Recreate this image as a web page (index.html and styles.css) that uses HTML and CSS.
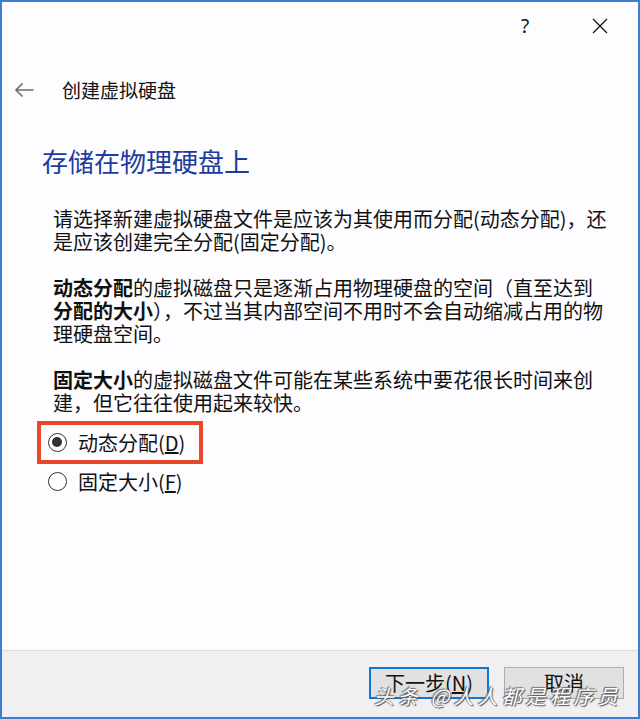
FILE: index.html
```html
<!DOCTYPE html>
<html lang="zh-CN">

<head>
    <meta charset="UTF-8">
    <meta name="viewport" content="width=device-width, initial-scale=1.0">
    <title>创建虚拟硬盘</title>
    <link rel="stylesheet" href="styles.css">
</head>

<body>
    <div class="window">
        <div class="caption">
            <span class="help">?</span>
            <svg class="close" width="16" height="16" viewBox="0 0 16 16">
                <path d="M1 1 L15 15 M15 1 L1 15" stroke="#111" stroke-width="1.3" fill="none" />
            </svg>
        </div>

        <div class="nav">
            <svg class="back" width="20" height="16" viewBox="0 0 20 16">
                <path d="M19.5 8 H2 M8.5 1.5 L2 8 L8.5 14.5" stroke="#6b6b6b" stroke-width="1.6" fill="none" />
            </svg>
            <span class="nav-title">创建虚拟硬盘</span>
        </div>

        <div class="page">
            <h1 class="heading">存储在物理硬盘上</h1>

            <p class="texto">请选择新建虚拟硬盘文件是应该为其使用而分配(动态分配)，还<br>是应该创建完全分配(固定分配)。</p>

            <p class="texto"><b>动态分配</b>的虚拟磁盘只是逐渐占用物理硬盘的空间（直至达到<br><b>分配的大小</b>），不过当其内部空间不用时不会自动缩减占用的物<br>理硬盘空间。</p>

            <p class="texto"><b>固定大小</b>的虚拟磁盘文件可能在某些系统中要花很长时间来创<br>建，但它往往使用起来较快。</p>

            <div class="choices">
                <label class="choice marked"><span class="radio on"></span><span class="choice-text">动态分配(<u>D</u>)</span></label>
                <label class="choice"><span class="radio"></span><span class="choice-text">固定大小(<u>F</u>)</span></label>
            </div>
        </div>

        <div class="footer">
            <button class="btn btn-default">下一步(<u>N</u>)</button>
            <button class="btn">取消</button>
            <span class="watermark">头条 @人人都是程序员</span>
        </div>
    </div>
</body>

</html>
```

FILE: styles.css
```css
* {
    box-sizing: border-box;
}

body {
    margin: 0;
    padding: 0;
    background-color: #fdfcff;
    font-family: "Noto Sans CJK SC", "Noto Sans", sans-serif;
    color: #111;
}

.window {
    display: flex;
    flex-direction: column;
    width: 640px;
    height: 719px;
    border: 2px solid #3a7dd5;
    background-color: #fdfcff;
}

.caption {
    display: flex;
    justify-content: flex-end;
    align-items: center;
    height: 48px;
    padding-right: 30px;
    gap: 57px;
}

.help {
    width: 20px;
    text-align: center;
    font-family: "Noto Sans", sans-serif;
    font-size: 19px;
    line-height: 20px;
}

.nav {
    display: flex;
    align-items: center;
    height: 30px;
    margin-top: 25px;
    padding-left: 12px;
}

.nav-title {
    margin-left: 28px;
    font-size: 19px;
    line-height: 30px;
}

.page {
    flex: 1;
    padding-left: 40px;
}

.heading {
    margin: 40px 0 0 0;
    font-size: 26px;
    line-height: 32px;
    font-weight: normal;
    color: #1c3b9c;
}

.texto {
    margin: 30px 0 0 11px;
    font-size: 20px;
    line-height: 23px;
    white-space: nowrap;
}

.texto + .texto {
    margin-top: 23px;
}

.texto b {
    font-weight: bold;
}

.choices {
    display: flex;
    flex-direction: column;
    align-items: flex-start;
    margin-top: 7px;
    margin-left: -5px;
}

.choice {
    display: inline-flex;
    align-items: center;
    height: 43px;
    padding: 0 14px 0 7px;
    border: 4px solid transparent;
    gap: 11px;
}

.choice-text {
    font-size: 20px;
    line-height: 23px;
}

.choice + .choice {
    margin-top: -4px;
}

.choice.marked {
    border-color: #e8472b;
}

.radio {
    position: relative;
    width: 19px;
    height: 19px;
    border: 1.5px solid #333;
    border-radius: 50%;
    background-color: #fff;
}

.radio.on::after {
    content: "";
    position: absolute;
    top: 3px;
    left: 3px;
    width: 10px;
    height: 10px;
    border-radius: 50%;
    background-color: #333;
}

.footer {
    position: relative;
    display: flex;
    justify-content: flex-end;
    align-items: flex-start;
    height: 67px;
    padding: 16px 14px 0 0;
    gap: 15px;
    border-top: 1px solid #dcdcdc;
    background-color: #f0eff1;
}

.btn {
    width: 120px;
    height: 32px;
    border: 1px solid #adadad;
    background-color: #e1e1e1;
    font-family: "Noto Sans CJK SC", "Noto Sans", sans-serif;
    font-size: 20px;
    line-height: 28px;
    color: #111;
    padding: 0;
}

.btn-default {
    border: 2px solid #0a78d7;
}

.watermark {
    position: absolute;
    left: 372px;
    top: 30px;
    font-size: 20px;
    font-style: italic;
    color: #fff;
    text-shadow: 0 0 1px #555, 1px 1px 1px #555, -1px -1px 1px #777;
    letter-spacing: 4px;
}
```
